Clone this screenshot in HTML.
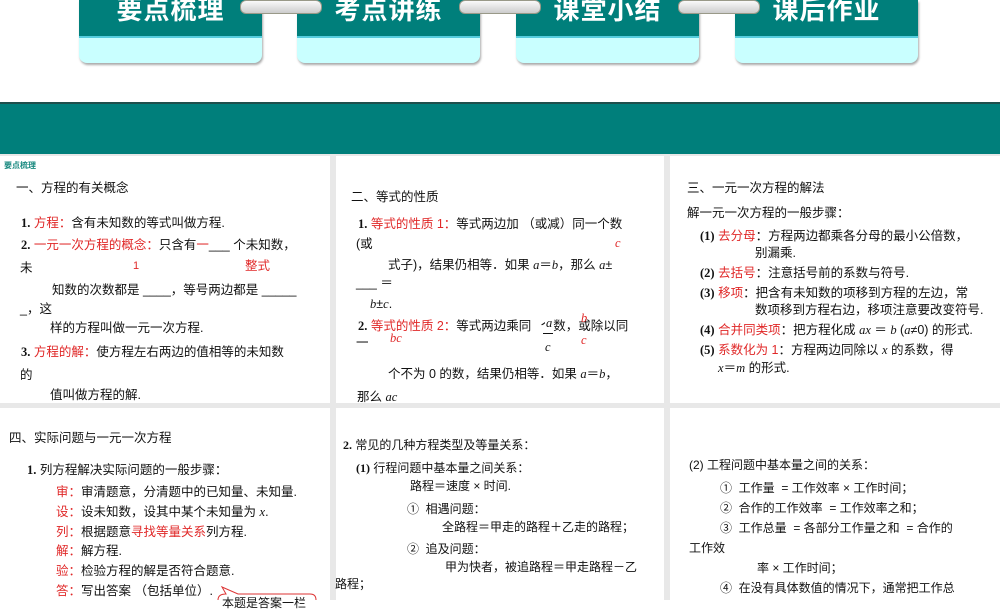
<!DOCTYPE html>
<html><head><meta charset="utf-8"><style>
body{margin:0;width:1000px;height:600px;overflow:hidden;position:relative;background:#fff;font-family:"Liberation Sans","Noto Sans CJK SC",sans-serif;}
.tab{position:absolute;top:0;width:183px;height:63px;border-radius:0 0 8px 8px;background:#c9ffff;box-shadow:1px 2px 2px #aaa;overflow:hidden}
.tab .t{height:36px;background:#007f7b;border-bottom:2px solid #5cd;color:#fff;font-weight:bold;font-size:26px;line-height:20px;text-align:center;letter-spacing:1px}
.con{position:absolute;top:0;width:80px;height:12px;border-radius:6px;background:linear-gradient(#fafafa,#ccc);border:1px solid #998}
.bar{position:absolute;left:0;top:102px;width:1000px;height:50px;background:#007f7b;border-top:2px solid #1e4f4c;border-bottom:2px solid #1e4f4c}
.bg{position:absolute;left:0;top:154px;width:1000px;height:446px;background:#e8e8e8}
.p{position:absolute;background:#fff}
.l{position:absolute;font-size:12.5px;line-height:18px;white-space:nowrap;color:#111}
.r{color:#e02828}
i{font-family:"Liberation Serif",serif}
b{font-family:"Liberation Serif",serif}
</style></head><body>
<div class="tab" style="left:79px"><div class="t">要点梳理</div></div>
<div class="tab" style="left:297px"><div class="t">考点讲练</div></div>
<div class="tab" style="left:516px"><div class="t">课堂小结</div></div>
<div class="tab" style="left:735px"><div class="t">课后作业</div></div>
<div class="con" style="left:240px"></div>
<div class="con" style="left:459px"></div>
<div class="con" style="left:678px"></div>
<div class="bar"></div>
<div class="bg"></div>
<div class="p" style="left:0;top:156px;width:330px;height:247px"></div>
<div class="p" style="left:336px;top:156px;width:328px;height:247px"></div>
<div class="p" style="left:670px;top:156px;width:330px;height:247px"></div>
<div class="p" style="left:0;top:408px;width:330px;height:192px"></div>
<div class="p" style="left:336px;top:408px;width:328px;height:192px"></div>
<div class="p" style="left:670px;top:408px;width:330px;height:192px"></div>

<div class="l" style="left:4px;top:157px;font-size:8px;color:#1a8a80;font-weight:bold">要点梳理</div>
<div class="l" style="left:16px;top:179px">一、方程的有关概念</div>
<div class="l" style="left:21px;top:214px"><b>1.</b> <span class="r">方程：</span>含有未知数的等式叫做方程.</div>
<div class="l" style="left:21px;top:236px"><b>2.</b> <span class="r">一元一次方程的概念：</span>只含有<span class="r">一</span>___ 个未知数，</div>
<div class="l" style="left:20px;top:259px">未</div>
<div class="l r" style="left:133px;top:257px;font-size:11px">1</div>
<div class="l r" style="left:245px;top:257px">整式</div>
<div class="l" style="left:52px;top:281px">知数的次数都是 ____，等号两边都是 _____</div>
<div class="l" style="left:20px;top:300px">_，这</div>
<div class="l" style="left:50px;top:319px">样的方程叫做一元一次方程.</div>
<div class="l" style="left:21px;top:343px"><b>3.</b> <span class="r">方程的解：</span>使方程左右两边的值相等的未知数</div>
<div class="l" style="left:20px;top:366px">的</div>
<div class="l" style="left:50px;top:386px">值叫做方程的解.</div>

<div class="l" style="left:351px;top:188px">二、等式的性质</div>
<div class="l" style="left:358px;top:215px"><b>1.</b> <span class="r">等式的性质 1：</span>等式两边加 （或减）同一个数</div>
<div class="l" style="left:356px;top:235px">(或</div>
<div class="l r" style="left:615px;top:234px"><i>c</i></div>
<div class="l" style="left:388px;top:256px">式子)，结果仍相等．如果 <i>a</i>＝<i>b</i>，那么 <i>a</i>±</div>
<div class="l" style="left:356px;top:274px">___ ＝</div>
<div class="l" style="left:370px;top:295px"><i>b</i>±<i>c</i>.</div>
<div class="l" style="left:358px;top:317px"><b>2.</b> <span class="r">等式的性质 2：</span>等式两边乘同 <span style="margin-left:6px"></span>个数，或除以同</div>
<div class="l" style="left:356px;top:334px">一</div>
<div class="l r" style="left:390px;top:329px"><i>bc</i></div>
<div class="l" style="left:545px;top:314px;background:#fff;padding:0 1px"><i>a</i></div>
<div style="position:absolute;left:543px;top:333px;width:10px;height:1px;background:#111"></div>
<div class="l" style="left:545px;top:338px"><i>c</i></div>
<div class="l r" style="left:581px;top:309px"><i>b</i></div>
<div class="l r" style="left:581px;top:331px"><i>c</i></div>
<div class="l" style="left:388px;top:365px">个不为 0 的数，结果仍相等．如果 <i>a</i>＝<i>b</i>，</div>
<div class="l" style="left:357px;top:388px">那么 <i>ac</i></div>

<div class="l" style="left:687px;top:179px">三、一元一次方程的解法</div>
<div class="l" style="left:687px;top:204px">解一元一次方程的一般步骤：</div>
<div class="l" style="left:700px;top:227px"><b>(1)</b> <span class="r">去分母</span>：方程两边都乘各分母的最小公倍数，</div>
<div class="l" style="left:755px;top:244px">别漏乘.</div>
<div class="l" style="left:700px;top:264px"><b>(2)</b> <span class="r">去括号</span>：注意括号前的系数与符号.</div>
<div class="l" style="left:700px;top:284px"><b>(3)</b> <span class="r">移项</span>：把含有未知数的项移到方程的左边，常</div>
<div class="l" style="left:755px;top:301px">数项移到方程右边，移项注意要改变符号.</div>
<div class="l" style="left:700px;top:321px"><b>(4)</b> <span class="r">合并同类项</span>：把方程化成 <i>ax</i> ＝ <i>b</i> (<i>a</i>≠0) 的形式.</div>
<div class="l" style="left:700px;top:341px"><b>(5)</b> <span class="r">系数化为 1</span>：方程两边同除以 <i>x</i> 的系数，得</div>
<div class="l" style="left:718px;top:359px"><i>x</i>＝<i>m</i> 的形式.</div>

<div class="l" style="left:9px;top:429px">四、实际问题与一元一次方程</div>
<div class="l" style="left:27px;top:461px"><b>1.</b> 列方程解决实际问题的一般步骤：</div>
<div class="l" style="left:56px;top:483px"><span class="r">审：</span>审清题意，分清题中的已知量、未知量.</div>
<div class="l" style="left:56px;top:503px"><span class="r">设：</span>设未知数，设其中某个未知量为 <i>x</i>.</div>
<div class="l" style="left:56px;top:523px"><span class="r">列：</span>根据题意<span class="r">寻找等量关系</span>列方程.</div>
<div class="l" style="left:56px;top:542px"><span class="r">解：</span>解方程.</div>
<div class="l" style="left:56px;top:562px"><span class="r">验：</span>检验方程的解是否符合题意.</div>
<div class="l" style="left:56px;top:582px"><span class="r">答：</span>写出答案 （包括单位）.</div>
<svg style="position:absolute;left:210px;top:584px" width="110" height="16"><path d="M12 3 L28 10 L100 10 Q106 10 106 16 L106 20 L8 20 L8 16 Q8 10 16 10 Z" fill="#fff" stroke="#d33" stroke-width="1"/></svg>
<div class="l" style="left:222px;top:594px;font-size:12px">本题是答案一栏</div>

<div class="l" style="left:343px;top:436px;font-size:12px"><b>2.</b> 常见的几种方程类型及等量关系：</div>
<div class="l" style="left:356px;top:459px;font-size:12px"><b>(1)</b> 行程问题中基本量之间关系：</div>
<div class="l" style="left:410px;top:477px;font-size:12px">路程＝速度 × 时间.</div>
<div class="l" style="left:407px;top:500px;font-size:12px">①&nbsp; 相遇问题：</div>
<div class="l" style="left:442px;top:518px;font-size:12px">全路程＝甲走的路程＋乙走的路程；</div>
<div class="l" style="left:407px;top:540px;font-size:12px">②&nbsp; 追及问题：</div>
<div class="l" style="left:445px;top:558px;font-size:12px">甲为快者，被追路程＝甲走路程－乙</div>
<div class="l" style="left:335px;top:575px;font-size:12px">路程；</div>

<div class="l" style="left:689px;top:456px;font-size:12px">(2) 工程问题中基本量之间的关系：</div>
<div class="l" style="left:720px;top:479px;font-size:12px">①&nbsp; 工作量 &nbsp;= 工作效率 × 工作时间；</div>
<div class="l" style="left:720px;top:499px;font-size:12px">②&nbsp; 合作的工作效率 &nbsp;= 工作效率之和；</div>
<div class="l" style="left:720px;top:519px;font-size:12px">③&nbsp; 工作总量 &nbsp;= 各部分工作量之和 &nbsp;= 合作的</div>
<div class="l" style="left:689px;top:539px;font-size:12px">工作效</div>
<div class="l" style="left:757px;top:559px;font-size:12px">率 × 工作时间；</div>
<div class="l" style="left:720px;top:579px;font-size:12px">④&nbsp; 在没有具体数值的情况下，通常把工作总</div>
</body></html>
